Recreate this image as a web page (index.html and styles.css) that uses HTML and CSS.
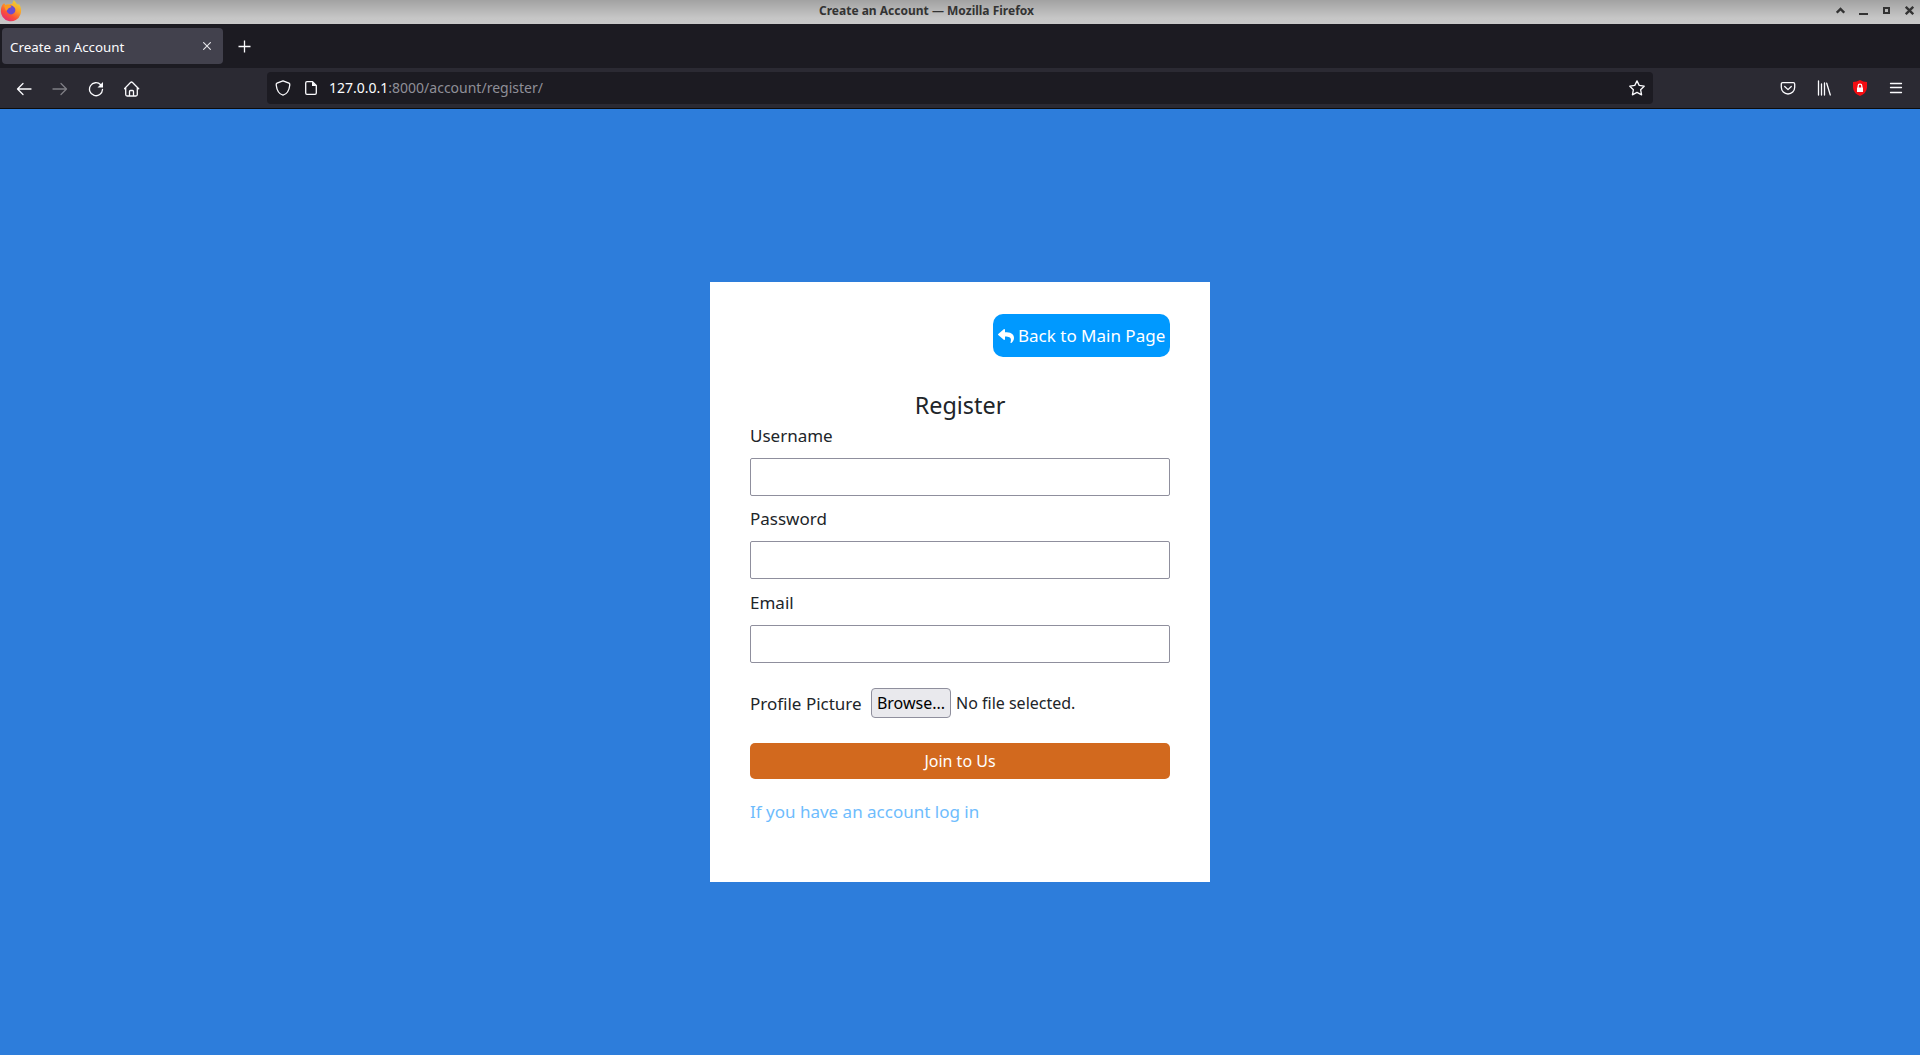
FILE: index.html
```html
<!DOCTYPE html>
<html lang="en">
<head>
<meta charset="utf-8">
<title>Create an Account</title>
<link rel="stylesheet" href="styles.css">
</head>
<body>
<header class="titlebar">
  <svg class="firefox" width="22" height="24" viewBox="0 0 22 24">
    <defs><linearGradient id="flame" x1=".85" y1="0" x2=".25" y2="1"><stop offset="0" stop-color="#e6dc3c"/><stop offset=".38" stop-color="#fba226"/><stop offset=".7" stop-color="#fb5038"/><stop offset="1" stop-color="#e02a78"/></linearGradient></defs>
    <path d="M13.8 0C15 1.300 16 2.500 17 4.200L19.200 4.500C21.300 7 21.600 11.500 20.400 14.500A10 10 0 0 1 1 10C1 7 2 5.500 3.200 3.700L4.600 3.400 5.300 5 8.300 4.200 12 4Z" fill="url(#flame)"/>
    <circle cx="11" cy="10" r="4.400" fill="#6b4ccf"/>
    <path d="M4 5.500C7 4 10 4.500 11.500 7L8.500 8.200C8 9.500 7 10 6 11Z" fill="#fb9b20"/>
    <path d="M11 4C13 3.500 15.500 5 16 8L13 6Z" fill="#f9b52c"/>
  </svg>
  <span class="window-title">Create an Account — Mozilla Firefox</span>
  <div class="window-buttons">
    <svg width="9" height="9" viewBox="0 0 9 9"><path d="M.7 6.700 4.500 2.900 8.300 6.700" fill="none" stroke="#333" stroke-width="2.500"/></svg>
    <svg width="9" height="9" viewBox="0 0 9 9"><path d="M0 7h9v2H0z" fill="#333"/></svg>
    <svg width="9" height="9" viewBox="0 0 9 9"><path d="M2 2h5v5H2z" fill="none" stroke="#333" stroke-width="2"/></svg>
    <svg width="9" height="9" viewBox="0 0 9 9"><path d="M.8.8 8.200 8.200M8.200.8.8 8.200" stroke="#333" stroke-width="2.300"/></svg>
  </div>
</header>

<div class="tabs">
  <div class="tab"><span>Create an Account</span>
    <svg width="8" height="8" viewBox="0 0 8 8"><path d="M.2.2 7.800 7.800M7.800.2.2 7.800" stroke="#e6e6ea" stroke-width="1.100"/></svg>
  </div>
  <svg class="new-tab" width="13" height="13" viewBox="0 0 13 13"><path d="M6.500.5v12M.5 6.500h12" stroke="#fbfbfe" stroke-width="1.300"/></svg>
</div>

<nav class="toolbar">
  <div class="nav-icons">
    <svg width="16" height="16" viewBox="0 0 16 16"><path d="M15 8H1.800M7 2.500 1.500 8 7 13.500"/></svg>
    <svg class="dim" width="16" height="16" viewBox="0 0 16 16"><path d="M1 8h13.200M9 2.500 14.500 8 9 13.500"/></svg>
    <svg width="16" height="16" viewBox="0 0 16 16"><path d="M14.500 8.500A6.500 6.500 0 1 1 12.700 3.700"/><path class="solid" d="M15 1v5.500H9.500z"/></svg>
    <svg width="16" height="16" viewBox="0 0 16 16"><path d="M.3 7.800 6.500 1.500Q7.500 .600 8.500 1.500L14.700 7.800M1.700 6.800V13.500Q1.700 15 3.200 15H11.800Q13.300 15 13.300 13.500V6.800M5.500 15V10.500Q5.500 9.500 6.500 9.500H8.500Q9.500 9.500 9.500 10.500V15"/></svg>
  </div>
  <div class="urlbar">
    <svg width="16" height="16" viewBox="0 0 16 16"><path d="M8 .8 14 3.200Q15 3.700 14.800 5 13.800 13.700 8 15.200 2.200 13.700 1.200 5 1 3.700 2 3.200Z"/></svg>
    <svg width="16" height="16" viewBox="0 0 16 16"><path d="M4 1.600H9.500L13.300 5.500V13Q13.300 14.400 12 14.400H4Q2.700 14.400 2.700 13V3Q2.700 1.600 4 1.600Z"/><path class="solid" d="M9 1.500 13.500 6H9z"/></svg>
    <span class="url"><b>127.0.0.1</b>:8000/account/register/</span>
    <svg class="star" width="16" height="16" viewBox="0 0 16 16"><path d="M8 .9 10.200 5.400 15.200 6.200 11.600 9.700 12.600 14.800 8 12.400 3.400 14.800 4.400 9.700.8 6.200 5.800 5.400Z"/></svg>
  </div>
  <div class="tools">
    <svg width="16" height="16" viewBox="0 0 16 16"><path d="M2.700 2.600H13.300Q14.700 2.600 14.700 4V7.300A6.700 6.700 0 0 1 1.300 7.300V4Q1.300 2.600 2.700 2.600ZM4.700 6.500 8 9.600 11.300 6.500"/></svg>
    <svg width="16" height="16" viewBox="0 0 16 16"><path d="M2.500 1v14M5.500 4v11M8.500 3v12M10.700 3.200 14.300 15"/></svg>
    <svg width="16" height="16" viewBox="0 0 16 16"><path class="shield" d="M8 0Q11 2 15 2V7.500Q14.500 13.500 8 16 1.500 13.500 1 7.500V2Q5 2 8 0Z"/><path class="solid" d="M5 7.500h6V12H5z"/><path d="M6.200 7.500V6A1.800 1.800 0 0 1 9.800 6V7.500"/></svg>
    <svg width="16" height="16" viewBox="0 0 16 16"><path d="M2.500 3.500h11M2.500 7.500h11M2.500 12.500h11"/></svg>
  </div>
</nav>

<main class="page">
  <form class="card">
    <a class="back"><svg width="16" height="16" viewBox="0 0 512 512"><path fill="#fff" d="M8.300 189.800 184.300 37.900C199.700 24.500 224 35.300 224 56.100V136c160.600 1.800 288 34 288 186.300 0 61.400-39.600 122.300-83.300 154.100-13.700 9.900-33.100-2.500-28.100-18.600C446 312.800 379.100 274.300 224 272v88c0 20.700-24.300 31.500-39.700 18.200L8.300 226.200C-2.800 216.700-2.800 199.300 8.300 189.800Z"/></svg><span>Back to Main Page</span></a>
    <h1>Register</h1>
    <label class="field"><span>Username</span><input type="text"></label>
    <label class="field password"><span>Password</span><input type="password"></label>
    <label class="field"><span>Email</span><input type="email"></label>
    <div class="file"><span class="file-label">Profile Picture</span><button type="button">Browse...</button><span>No file selected.</span></div>
    <button class="join" type="button">Join to Us</button>
    <a class="login">If you have an account log in</a>
  </form>
</main>
</body>
</html>
```
FILE: styles.css
```css
* { box-sizing: border-box; }
body {
  margin: 0;
  height: 1055px;
  display: flex;
  flex-direction: column;
  overflow: hidden;
  font-family: "Noto Sans", sans-serif;
  color: #212529;
}
svg { display: block; flex: none; }

.titlebar {
  height: 24px;
  display: grid;
  grid-template-columns: 94px 1fr 94px;
  background: linear-gradient(#a2a2a2, #c6c6c6 75%, #c8c8c8);
}
.window-title {
  text-align: center;
  font: bold 12px/21px "Noto Sans", sans-serif;
  color: #333;
  padding-right: 67px;
}
.window-buttons { display: flex; gap: 14px; padding-top: 6px; margin-left: 10px; }

.tabs { height: 44px; display: flex; background: #1c1b22; padding: 4px 2px; }
.tab {
  width: 221px;
  height: 36px;
  padding: 0 12px 0 8px;
  display: flex;
  align-items: center;
  justify-content: space-between;
  background: #42414d;
  border-radius: 4px;
  color: #fbfbfe;
  font-size: 13.33px;
}
.tab span { padding-top: 2px; }
.new-tab { margin: 12px 0 0 15px; }

.toolbar {
  height: 41px;
  display: flex;
  background: #2b2a33;
  border-bottom: 1px solid #0c0c0d;
}
.toolbar path { fill: none; stroke: #fbfbfe; stroke-width: 1.3; stroke-linejoin: round; stroke-linecap: round; }
.toolbar .solid { fill: #fbfbfe; stroke: none; }
.toolbar .shield { fill: #f20d12; stroke: none; }
.toolbar .dim { opacity: .4; }
.nav-icons { width: 267px; display: flex; gap: 20px; padding: 13px 16px; }
.urlbar {
  width: 1386px;
  height: 32px;
  margin-top: 4px;
  padding: 0 8px;
  display: flex;
  align-items: center;
  gap: 12px;
  background: #1c1b22;
  border-radius: 4px;
}
.url { font-size: 14px; color: #8f8f98; margin-left: -2px; padding-bottom: 2px; }
.url b { font-weight: normal; color: #fbfbfe; }
.star { margin-left: auto; }
.tools { display: flex; gap: 20px; padding: 12px 0 0 127px; }

.page {
  flex: 1;
  display: flex;
  justify-content: center;
  align-items: flex-start;
  padding-top: 173px;
  background: #2d7ddb;
}
.card {
  width: 500px;
  height: 600px;
  padding: 32px 40px;
  display: flex;
  flex-direction: column;
  background: #fff;
  font-size: 17px;
}
.back {
  align-self: flex-end;
  width: 177px;
  height: 43px;
  padding-left: 5px;
  display: flex;
  align-items: center;
  gap: 4px;
  white-space: nowrap;
  background: #09f;
  border-radius: 10px;
  color: #fff;
}
h1 {
  margin: 34px 0 0;
  text-align: center;
  font-size: 23.4px;
  font-weight: 400;
  line-height: 29px;
}
.field { display: flex; flex-direction: column; height: 83px; }
.field.password { height: 84px; }
.field span { line-height: 32px; height: 38px; }
.field input {
  height: 38px;
  border: 1px solid #8f8f9d;
  border-radius: 2px;
  background: #fff;
  outline: 0;
}
.file { height: 30px; margin-top: 18px; display: flex; align-items: center; font-size: 16px; }
.file-label { width: 121px; font-size: 17px; }
.file button {
  width: 80px;
  height: 30px;
  margin-right: 5px;
  padding: 0;
  background: #e9e9ed;
  border: 1px solid #8f8f9d;
  border-radius: 4px;
  font: inherit;
  color: #000;
}
.join {
  height: 36px;
  margin-top: 25px;
  border: 0;
  border-radius: 5px;
  background: #d2691e;
  color: #fff;
  font: 16px "Noto Sans", sans-serif;
}
.login { margin-top: 21px; line-height: 24px; color: #6ebcfd; }
```
